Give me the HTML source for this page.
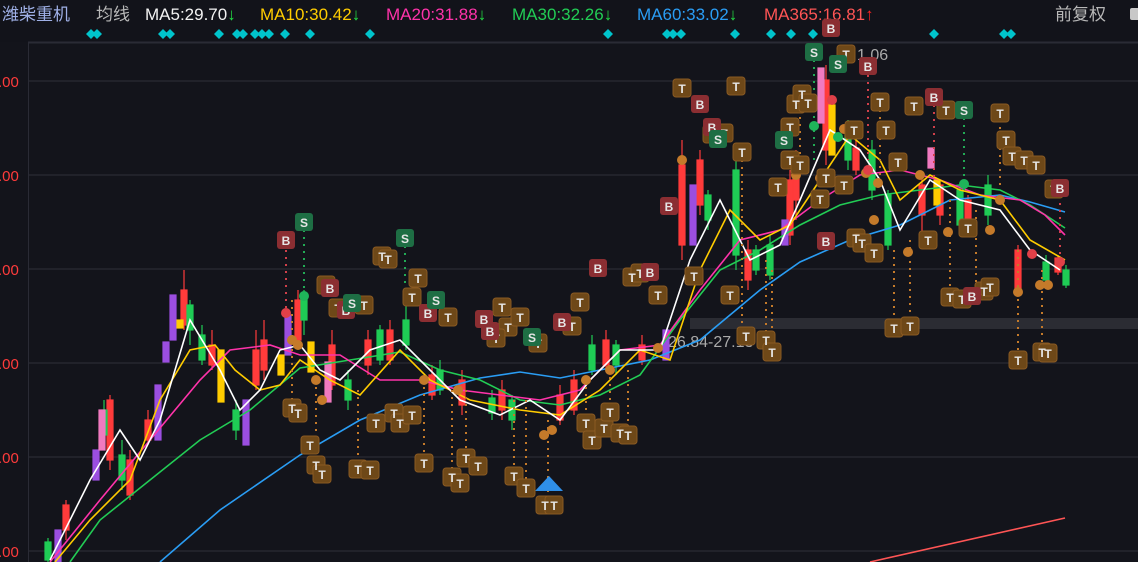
<!DOCTYPE html>
<html><head><meta charset="utf-8"><style>
html,body{margin:0;padding:0;background:#13141b;width:1138px;height:562px;overflow:hidden}
svg{display:block}
.h{font-family:"Liberation Sans","Noto Sans CJK SC",sans-serif;font-size:17px}
.m{font-family:"Liberation Sans",sans-serif;font-size:12px;font-weight:bold;fill:#e6e6e6;text-anchor:middle}
</style></head><body>
<svg width="1138" height="562" xmlns="http://www.w3.org/2000/svg">
<rect width="1138" height="562" fill="#13141b"/>
<rect width="1138" height="42" fill="#12131a"/>
<line x1="28" y1="42.5" x2="1138" y2="42.5" stroke="#2a2b35" stroke-width="2"/>
<line x1="28.5" y1="42" x2="28.5" y2="562" stroke="#2a2b35"/>
<g stroke="#262730" stroke-width="1.5">
<line x1="29" y1="81" x2="1138" y2="81"/><line x1="29" y1="175" x2="1138" y2="175"/>
<line x1="29" y1="269" x2="1138" y2="269"/><line x1="29" y1="363" x2="1138" y2="363"/>
<line x1="29" y1="457" x2="1138" y2="457"/><line x1="29" y1="551" x2="1138" y2="551"/>
</g>
<g font-family="Liberation Sans,sans-serif" font-size="15" fill="#ff3b3b">
<text x="-2" y="87">.00</text><text x="-2" y="181">.00</text><text x="-2" y="275">.00</text>
<text x="-2" y="369">.00</text><text x="-2" y="463">.00</text><text x="-2" y="557">.00</text>
</g>
<rect x="690" y="318" width="448" height="11" fill="#2b2c33"/>
<text x="668" y="347" font-family="Liberation Sans,sans-serif" font-size="16" fill="#aaa">26.84-27.13</text>
<text x="841" y="60" font-family="Liberation Sans,sans-serif" font-size="16" fill="#aaa">←1.06</text>

<g class="h">
<text x="2" y="20" fill="#9fb0e6">潍柴重机</text>
<text x="96" y="20" fill="#b8b8b8">均线</text>
<text x="145" y="20" fill="#f2f2f2">MA5:29.70<tspan fill="#22dd44">↓</tspan></text>
<text x="260" y="20" fill="#ffcc00">MA10:30.42<tspan fill="#22dd44">↓</tspan></text>
<text x="386" y="20" fill="#ff33aa">MA20:31.88<tspan fill="#22dd44">↓</tspan></text>
<text x="512" y="20" fill="#22cc55">MA30:32.26<tspan fill="#22dd44">↓</tspan></text>
<text x="637" y="20" fill="#2a9df4">MA60:33.02<tspan fill="#22dd44">↓</tspan></text>
<text x="764" y="20" fill="#ff5555">MA365:16.81<tspan fill="#ff2222">↑</tspan></text>
<text x="1055" y="20" fill="#b8b8b8">前复权</text>
</g>
<rect x="1130" y="8" width="10" height="12" rx="2" fill="#c8c8c8"/>

<g fill="#00c4cc">
<path d="M91 29l5 5-5 5-5-5z"/><path d="M97 29l5 5-5 5-5-5z"/><path d="M163 29l5 5-5 5-5-5z"/><path d="M170 29l5 5-5 5-5-5z"/>
<path d="M219 29l5 5-5 5-5-5z"/><path d="M237 29l5 5-5 5-5-5z"/><path d="M243 29l5 5-5 5-5-5z"/><path d="M255 29l5 5-5 5-5-5z"/>
<path d="M262 29l5 5-5 5-5-5z"/><path d="M269 29l5 5-5 5-5-5z"/><path d="M285 29l5 5-5 5-5-5z"/><path d="M310 29l5 5-5 5-5-5z"/>
<path d="M370 29l5 5-5 5-5-5z"/><path d="M608 29l5 5-5 5-5-5z"/><path d="M667 29l5 5-5 5-5-5z"/><path d="M673 29l5 5-5 5-5-5z"/>
<path d="M681 29l5 5-5 5-5-5z"/><path d="M735 29l5 5-5 5-5-5z"/><path d="M771 29l5 5-5 5-5-5z"/><path d="M791 29l5 5-5 5-5-5z"/>
<path d="M813 29l5 5-5 5-5-5z"/><path d="M934 29l5 5-5 5-5-5z"/><path d="M1004 29l5 5-5 5-5-5z"/><path d="M1011 29l5 5-5 5-5-5z"/>
</g>

<!-- candles -->
<g stroke-width="1.2">
<g fill="#ff3b3b" stroke="#ff3b3b">
<line x1="66" y1="500" x2="66" y2="540"/><rect x="63" y="505" width="6" height="25"/>
<line x1="110" y1="395" x2="110" y2="470"/><rect x="107" y="400" width="6" height="60"/>
<line x1="130" y1="450" x2="130" y2="500"/><rect x="127" y="460" width="6" height="35"/>
<line x1="148" y1="410" x2="148" y2="445"/><rect x="145" y="420" width="6" height="20"/>
<line x1="184" y1="270" x2="184" y2="330"/><rect x="181" y="290" width="6" height="35"/>
<line x1="212" y1="330" x2="212" y2="370"/><rect x="209" y="345" width="6" height="20"/>
<line x1="256" y1="330" x2="256" y2="390"/><rect x="253" y="350" width="6" height="35"/>
<line x1="264" y1="320" x2="264" y2="380"/><rect x="261" y="340" width="6" height="30"/>
<line x1="298" y1="290" x2="298" y2="345"/><rect x="295" y="300" width="6" height="40"/>
<line x1="332" y1="330" x2="332" y2="390"/><rect x="329" y="345" width="6" height="40"/>
<line x1="368" y1="330" x2="368" y2="375"/><rect x="365" y="340" width="6" height="25"/>
<line x1="390" y1="320" x2="390" y2="365"/><rect x="387" y="330" width="6" height="30"/>
<line x1="432" y1="365" x2="432" y2="400"/><rect x="429" y="375" width="6" height="20"/>
<line x1="462" y1="370" x2="462" y2="415"/><rect x="459" y="380" width="6" height="25"/>
<line x1="502" y1="380" x2="502" y2="420"/><rect x="499" y="390" width="6" height="20"/>
<line x1="560" y1="385" x2="560" y2="425"/><rect x="557" y="395" width="6" height="25"/>
<line x1="574" y1="370" x2="574" y2="415"/><rect x="571" y="380" width="6" height="30"/>
<line x1="606" y1="330" x2="606" y2="370"/><rect x="603" y="340" width="6" height="25"/>
<line x1="642" y1="335" x2="642" y2="365"/><rect x="639" y="345" width="6" height="15"/>
<line x1="682" y1="140" x2="682" y2="260"/><rect x="679" y="165" width="6" height="80"/>
<line x1="700" y1="150" x2="700" y2="215"/><rect x="697" y="160" width="6" height="45"/>
<line x1="748" y1="240" x2="748" y2="290"/><rect x="745" y="250" width="6" height="30"/>
<line x1="790" y1="170" x2="790" y2="245"/><rect x="787" y="180" width="6" height="55"/>
<line x1="796" y1="150" x2="796" y2="220"/><rect x="793" y="160" width="6" height="40"/>
<line x1="826" y1="65" x2="826" y2="165"/><rect x="823" y="80" width="6" height="70"/>
<line x1="856" y1="140" x2="856" y2="175"/><rect x="853" y="148" width="6" height="22"/>
<line x1="922" y1="175" x2="922" y2="240"/><rect x="919" y="185" width="6" height="30"/>
<line x1="940" y1="180" x2="940" y2="225"/><rect x="937" y="185" width="6" height="30"/>
<line x1="968" y1="195" x2="968" y2="230"/><rect x="965" y="200" width="6" height="20"/>
<line x1="1018" y1="245" x2="1018" y2="295"/><rect x="1015" y="250" width="6" height="40"/>
<line x1="1058" y1="255" x2="1058" y2="275"/><rect x="1055" y="258" width="6" height="14"/>
</g>
<g fill="#1fcc55" stroke="#1fcc55">
<line x1="48" y1="538" x2="48" y2="562"/><rect x="45" y="542" width="6" height="18"/>
<line x1="104" y1="400" x2="104" y2="440"/><rect x="101" y="410" width="6" height="25"/>
<line x1="122" y1="440" x2="122" y2="490"/><rect x="119" y="455" width="6" height="25"/>
<line x1="190" y1="300" x2="190" y2="345"/><rect x="187" y="305" width="6" height="25"/>
<line x1="202" y1="325" x2="202" y2="365"/><rect x="199" y="335" width="6" height="25"/>
<line x1="236" y1="400" x2="236" y2="440"/><rect x="233" y="410" width="6" height="20"/>
<line x1="304" y1="290" x2="304" y2="335"/><rect x="301" y="295" width="6" height="25"/>
<line x1="348" y1="370" x2="348" y2="410"/><rect x="345" y="380" width="6" height="20"/>
<line x1="380" y1="325" x2="380" y2="365"/><rect x="377" y="330" width="6" height="30"/>
<line x1="406" y1="305" x2="406" y2="350"/><rect x="403" y="320" width="6" height="25"/>
<line x1="440" y1="360" x2="440" y2="395"/><rect x="437" y="370" width="6" height="20"/>
<line x1="492" y1="390" x2="492" y2="420"/><rect x="489" y="398" width="6" height="15"/>
<line x1="512" y1="395" x2="512" y2="430"/><rect x="509" y="400" width="6" height="20"/>
<line x1="592" y1="335" x2="592" y2="375"/><rect x="589" y="345" width="6" height="25"/>
<line x1="616" y1="340" x2="616" y2="375"/><rect x="613" y="345" width="6" height="20"/>
<line x1="708" y1="190" x2="708" y2="230"/><rect x="705" y="195" width="6" height="25"/>
<line x1="736" y1="160" x2="736" y2="270"/><rect x="733" y="170" width="6" height="85"/>
<line x1="756" y1="245" x2="756" y2="275"/><rect x="753" y="250" width="6" height="20"/>
<line x1="770" y1="235" x2="770" y2="280"/><rect x="767" y="245" width="6" height="30"/>
<line x1="848" y1="120" x2="848" y2="170"/><rect x="845" y="130" width="6" height="30"/>
<line x1="872" y1="140" x2="872" y2="200"/><rect x="869" y="150" width="6" height="40"/>
<line x1="888" y1="190" x2="888" y2="250"/><rect x="885" y="195" width="6" height="50"/>
<line x1="960" y1="185" x2="960" y2="235"/><rect x="957" y="190" width="6" height="35"/>
<line x1="988" y1="175" x2="988" y2="225"/><rect x="985" y="185" width="6" height="30"/>
<line x1="1046" y1="255" x2="1046" y2="285"/><rect x="1043" y="262" width="6" height="18"/>
<line x1="1066" y1="265" x2="1066" y2="288"/><rect x="1063" y="270" width="6" height="15"/>
</g>
<g fill="#9b4ee0" stroke="#9b4ee0">
<rect x="55" y="530" width="6" height="32"/><rect x="93" y="450" width="6" height="30"/>
<rect x="155" y="385" width="6" height="55"/><rect x="163" y="342" width="6" height="20"/>
<rect x="170" y="295" width="6" height="45"/><rect x="243" y="400" width="6" height="45"/>
<rect x="285" y="315" width="6" height="40"/><rect x="663" y="330" width="6" height="30"/>
<rect x="690" y="185" width="6" height="60"/><rect x="782" y="220" width="6" height="25"/>
</g>
<g fill="#f07ac0" stroke="#f07ac0">
<rect x="99" y="410" width="6" height="40"/><rect x="325" y="362" width="6" height="40"/>
<rect x="818" y="68" width="6" height="55"/><rect x="928" y="148" width="6" height="20"/>
</g>
<g fill="#ffcc00" stroke="#ffcc00">
<rect x="177" y="320" width="6" height="8"/><rect x="218" y="350" width="6" height="52"/>
<rect x="278" y="355" width="6" height="20"/><rect x="308" y="342" width="6" height="30"/>
<rect x="829" y="105" width="6" height="50"/><rect x="934" y="180" width="6" height="25"/>
</g>
</g>

<!-- MAs -->
<g fill="none" stroke-width="1.6">
<polyline stroke="#2a9df4" points="160,562 220,510 300,455 360,420 420,395 480,378 520,372 560,378 600,370 650,360 700,340 760,290 800,262 850,240 900,225 950,200 1000,195 1030,202 1065,212"/>
<polyline stroke="#22cc55" points="70,562 100,520 150,480 200,440 250,410 300,368 350,360 400,352 440,370 480,380 520,400 560,405 600,395 640,375 680,320 720,270 760,250 800,225 840,205 880,195 920,190 960,185 1000,190 1030,205 1065,228"/>
<polyline stroke="#ff33aa" points="50,562 100,500 150,440 200,380 230,350 270,345 300,355 340,355 380,380 420,380 460,390 500,395 540,400 580,390 620,350 660,345 700,290 740,240 780,230 820,200 860,175 900,170 940,180 980,195 1020,200 1045,215 1065,235"/>
<polyline stroke="#ffcc00" points="55,562 90,520 130,480 160,400 190,350 215,345 235,370 260,390 280,385 300,360 330,380 360,395 400,350 430,380 470,400 520,410 560,415 600,390 640,350 670,360 700,270 730,210 760,240 790,225 820,180 850,135 880,160 900,200 930,175 960,190 1000,200 1030,240 1065,260"/>
<polyline stroke="#ffffff" points="50,560 90,480 120,430 140,460 160,420 190,320 220,370 240,410 260,390 280,350 300,345 320,370 340,380 370,350 400,340 430,370 460,400 500,415 530,400 560,420 590,380 620,350 660,350 690,260 720,200 750,260 780,245 800,200 830,130 860,150 880,180 900,230 930,180 960,200 1000,210 1030,250 1060,270"/>
<line stroke="#ff5555" x1="870" y1="562" x2="1065" y2="518"/>
</g>

<!-- dotted stems -->
<g stroke="#c47a2a" stroke-width="2" stroke-dasharray="2 5">
<line x1="292" y1="300" x2="292" y2="405"/><line x1="316" y1="380" x2="316" y2="460"/><line x1="358" y1="390" x2="358" y2="465"/>
<line x1="424" y1="380" x2="424" y2="460"/><line x1="452" y1="390" x2="452" y2="475"/><line x1="466" y1="390" x2="466" y2="455"/>
<line x1="514" y1="400" x2="514" y2="472"/><line x1="526" y1="400" x2="526" y2="485"/><line x1="548" y1="420" x2="548" y2="500"/>
<line x1="586" y1="380" x2="586" y2="420"/><line x1="610" y1="370" x2="610" y2="408"/><line x1="628" y1="370" x2="628" y2="432"/>
<line x1="742" y1="160" x2="742" y2="330"/><line x1="766" y1="260" x2="766" y2="336"/><line x1="772" y1="270" x2="772" y2="348"/>
<line x1="894" y1="250" x2="894" y2="325"/><line x1="910" y1="240" x2="910" y2="322"/><line x1="950" y1="200" x2="950" y2="293"/>
<line x1="976" y1="210" x2="976" y2="292"/><line x1="1018" y1="250" x2="1018" y2="356"/><line x1="1042" y1="270" x2="1042" y2="348"/>
<line x1="800" y1="110" x2="800" y2="160"/><line x1="880" y1="110" x2="880" y2="180"/><line x1="1000" y1="120" x2="1000" y2="190"/>
</g>
<g stroke="#d0404a" stroke-width="2" stroke-dasharray="2 5">
<line x1="286" y1="250" x2="286" y2="310"/><line x1="868" y1="75" x2="868" y2="160"/><line x1="934" y1="105" x2="934" y2="180"/><line x1="1060" y1="196" x2="1060" y2="255"/>
</g>
<g stroke="#22aa55" stroke-width="2" stroke-dasharray="2 5">
<line x1="304" y1="230" x2="304" y2="295"/><line x1="405" y1="246" x2="405" y2="305"/><line x1="814" y1="60" x2="814" y2="160"/><line x1="964" y1="118" x2="964" y2="190"/>
</g>

<!-- dots -->
<g fill="#c47a2a">
<circle cx="292" cy="340" r="5"/><circle cx="298" cy="345" r="5"/><circle cx="316" cy="380" r="5"/><circle cx="322" cy="400" r="5"/>
<circle cx="424" cy="380" r="5"/><circle cx="458" cy="390" r="5"/><circle cx="544" cy="435" r="5"/><circle cx="552" cy="430" r="5"/>
<circle cx="586" cy="380" r="5"/><circle cx="610" cy="370" r="5"/><circle cx="658" cy="348" r="5"/><circle cx="682" cy="160" r="5"/>
<circle cx="800" cy="165" r="5"/><circle cx="796" cy="175" r="5"/><circle cx="820" cy="178" r="5"/><circle cx="844" cy="129" r="5"/>
<circle cx="866" cy="173" r="5"/><circle cx="874" cy="220" r="5"/><circle cx="908" cy="252" r="5"/><circle cx="920" cy="175" r="5"/>
<circle cx="1018" cy="292" r="5"/><circle cx="1040" cy="285" r="5"/><circle cx="1048" cy="285" r="5"/><circle cx="1000" cy="200" r="5"/>
<circle cx="948" cy="232" r="5"/><circle cx="990" cy="230" r="5"/><circle cx="878" cy="183" r="5"/>
</g>
<g fill="#e04048"><circle cx="286" cy="313" r="5"/><circle cx="832" cy="100" r="5"/><circle cx="868" cy="170" r="5"/><circle cx="1032" cy="254" r="5"/><circle cx="1060" cy="262" r="5"/></g>
<g fill="#1fb55a"><circle cx="304" cy="296" r="5"/><circle cx="814" cy="126" r="5"/><circle cx="838" cy="137" r="5"/><circle cx="964" cy="184" r="5"/></g>

<path d="M549 476l14 15h-28z" fill="#2f8fe8"/>

<!-- T markers -->
<g fill="#6e4818" stroke="#8a5a22" stroke-width="1">
<rect x="283" y="399" width="18" height="18" rx="3"/><rect x="289" y="404" width="18" height="18" rx="3"/><rect x="301" y="436" width="18" height="18" rx="3"/>
<rect x="307" y="456" width="18" height="18" rx="3"/><rect x="313" y="465" width="18" height="18" rx="3"/><rect x="349" y="460" width="18" height="18" rx="3"/>
<rect x="361" y="461" width="18" height="18" rx="3"/><rect x="367" y="414" width="18" height="18" rx="3"/><rect x="385" y="404" width="18" height="18" rx="3"/>
<rect x="391" y="414" width="18" height="18" rx="3"/><rect x="403" y="406" width="18" height="18" rx="3"/><rect x="415" y="454" width="18" height="18" rx="3"/>
<rect x="443" y="468" width="18" height="18" rx="3"/><rect x="451" y="474" width="18" height="18" rx="3"/><rect x="457" y="449" width="18" height="18" rx="3"/>
<rect x="469" y="457" width="18" height="18" rx="3"/><rect x="505" y="467" width="18" height="18" rx="3"/><rect x="517" y="479" width="18" height="18" rx="3"/>
<rect x="536" y="496" width="18" height="18" rx="3"/><rect x="545" y="496" width="18" height="18" rx="3"/><rect x="577" y="414" width="18" height="18" rx="3"/>
<rect x="583" y="431" width="18" height="18" rx="3"/><rect x="595" y="419" width="18" height="18" rx="3"/><rect x="601" y="403" width="18" height="18" rx="3"/>
<rect x="611" y="424" width="18" height="18" rx="3"/><rect x="619" y="426" width="18" height="18" rx="3"/><rect x="571" y="293" width="18" height="18" rx="3"/>
<rect x="563" y="317" width="18" height="18" rx="3"/><rect x="529" y="334" width="18" height="18" rx="3"/><rect x="493" y="298" width="18" height="18" rx="3"/>
<rect x="499" y="318" width="18" height="18" rx="3"/><rect x="487" y="329" width="18" height="18" rx="3"/><rect x="511" y="308" width="18" height="18" rx="3"/>
<rect x="439" y="308" width="18" height="18" rx="3"/><rect x="409" y="269" width="18" height="18" rx="3"/><rect x="403" y="288" width="18" height="18" rx="3"/>
<rect x="373" y="247" width="18" height="18" rx="3"/><rect x="379" y="250" width="18" height="18" rx="3"/><rect x="355" y="296" width="18" height="18" rx="3"/>
<rect x="329" y="299" width="18" height="18" rx="3"/><rect x="317" y="276" width="18" height="18" rx="3"/><rect x="673" y="79" width="18" height="18" rx="3"/>
<rect x="727" y="77" width="18" height="18" rx="3"/><rect x="703" y="125" width="18" height="18" rx="3"/><rect x="715" y="124" width="18" height="18" rx="3"/>
<rect x="733" y="143" width="18" height="18" rx="3"/><rect x="685" y="267" width="18" height="18" rx="3"/><rect x="721" y="286" width="18" height="18" rx="3"/>
<rect x="737" y="327" width="18" height="18" rx="3"/><rect x="757" y="331" width="18" height="18" rx="3"/><rect x="763" y="343" width="18" height="18" rx="3"/>
<rect x="769" y="178" width="18" height="18" rx="3"/><rect x="787" y="95" width="18" height="18" rx="3"/><rect x="793" y="85" width="18" height="18" rx="3"/>
<rect x="781" y="151" width="18" height="18" rx="3"/><rect x="791" y="156" width="18" height="18" rx="3"/><rect x="799" y="94" width="18" height="18" rx="3"/>
<rect x="811" y="190" width="18" height="18" rx="3"/><rect x="817" y="169" width="18" height="18" rx="3"/><rect x="835" y="176" width="18" height="18" rx="3"/>
<rect x="847" y="229" width="18" height="18" rx="3"/><rect x="853" y="234" width="18" height="18" rx="3"/><rect x="865" y="244" width="18" height="18" rx="3"/>
<rect x="871" y="93" width="18" height="18" rx="3"/><rect x="877" y="121" width="18" height="18" rx="3"/><rect x="889" y="153" width="18" height="18" rx="3"/>
<rect x="905" y="97" width="18" height="18" rx="3"/><rect x="919" y="231" width="18" height="18" rx="3"/><rect x="937" y="101" width="18" height="18" rx="3"/>
<rect x="941" y="288" width="18" height="18" rx="3"/><rect x="953" y="290" width="18" height="18" rx="3"/><rect x="959" y="219" width="18" height="18" rx="3"/>
<rect x="975" y="282" width="18" height="18" rx="3"/><rect x="981" y="278" width="18" height="18" rx="3"/><rect x="991" y="104" width="18" height="18" rx="3"/>
<rect x="997" y="131" width="18" height="18" rx="3"/><rect x="1003" y="147" width="18" height="18" rx="3"/><rect x="1015" y="151" width="18" height="18" rx="3"/>
<rect x="1027" y="156" width="18" height="18" rx="3"/><rect x="1009" y="351" width="18" height="18" rx="3"/><rect x="1033" y="343" width="18" height="18" rx="3"/>
<rect x="1039" y="344" width="18" height="18" rx="3"/><rect x="885" y="319" width="18" height="18" rx="3"/><rect x="901" y="317" width="18" height="18" rx="3"/>
<rect x="623" y="268" width="18" height="18" rx="3"/><rect x="631" y="264" width="18" height="18" rx="3"/><rect x="649" y="286" width="18" height="18" rx="3"/>
<rect x="781" y="118" width="18" height="18" rx="3"/><rect x="845" y="121" width="18" height="18" rx="3"/><rect x="837" y="45" width="18" height="18" rx="3"/>
<rect x="1045" y="180" width="18" height="18" rx="3"/>
</g>
<g class="m">
<text x="292" y="413">T</text><text x="298" y="418">T</text><text x="310" y="450">T</text><text x="316" y="470">T</text><text x="322" y="479">T</text>
<text x="358" y="474">T</text><text x="370" y="475">T</text><text x="376" y="428">T</text><text x="394" y="418">T</text><text x="400" y="428">T</text>
<text x="412" y="420">T</text><text x="424" y="468">T</text><text x="452" y="482">T</text><text x="460" y="488">T</text><text x="466" y="463">T</text>
<text x="478" y="471">T</text><text x="514" y="481">T</text><text x="526" y="493">T</text><text x="545" y="510">T</text><text x="554" y="510">T</text>
<text x="586" y="428">T</text><text x="592" y="445">T</text><text x="604" y="433">T</text><text x="610" y="417">T</text><text x="620" y="438">T</text>
<text x="628" y="440">T</text><text x="580" y="307">T</text><text x="572" y="331">T</text><text x="538" y="348">T</text><text x="502" y="312">T</text>
<text x="508" y="332">T</text><text x="496" y="343">T</text><text x="520" y="322">T</text><text x="448" y="322">T</text><text x="418" y="283">T</text>
<text x="412" y="302">T</text><text x="382" y="261">T</text><text x="388" y="264">T</text><text x="364" y="310">T</text><text x="338" y="313">T</text>
<text x="326" y="290">T</text><text x="682" y="93">T</text><text x="736" y="91">T</text><text x="712" y="139">T</text><text x="724" y="138">T</text>
<text x="742" y="157">T</text><text x="694" y="281">T</text><text x="730" y="300">T</text><text x="746" y="341">T</text><text x="766" y="345">T</text>
<text x="772" y="357">T</text><text x="778" y="192">T</text><text x="796" y="109">T</text><text x="802" y="99">T</text><text x="790" y="165">T</text>
<text x="800" y="170">T</text><text x="808" y="108">T</text><text x="820" y="204">T</text><text x="826" y="183">T</text><text x="844" y="190">T</text>
<text x="856" y="243">T</text><text x="862" y="248">T</text><text x="874" y="258">T</text><text x="880" y="107">T</text><text x="886" y="135">T</text>
<text x="898" y="167">T</text><text x="914" y="111">T</text><text x="928" y="245">T</text><text x="946" y="115">T</text><text x="950" y="302">T</text>
<text x="962" y="304">T</text><text x="968" y="233">T</text><text x="984" y="296">T</text><text x="990" y="292">T</text><text x="1000" y="118">T</text>
<text x="1006" y="145">T</text><text x="1012" y="161">T</text><text x="1024" y="165">T</text><text x="1036" y="170">T</text><text x="1018" y="365">T</text>
<text x="1042" y="357">T</text><text x="1048" y="358">T</text><text x="894" y="333">T</text><text x="910" y="331">T</text><text x="632" y="282">T</text>
<text x="640" y="278">T</text><text x="658" y="300">T</text><text x="790" y="132">T</text><text x="854" y="135">T</text><text x="846" y="59">T</text>
<text x="1054" y="194">T</text>
</g>

<!-- B markers -->
<g fill="#8b2e32">
<rect x="277" y="231" width="18" height="18" rx="3"/><rect x="321" y="279" width="18" height="18" rx="3"/><rect x="589" y="259" width="18" height="18" rx="3"/>
<rect x="660" y="197" width="18" height="18" rx="3"/><rect x="691" y="95" width="18" height="18" rx="3"/><rect x="703" y="118" width="18" height="18" rx="3"/>
<rect x="817" y="232" width="18" height="18" rx="3"/><rect x="822" y="19" width="18" height="18" rx="3"/><rect x="859" y="57" width="18" height="18" rx="3"/>
<rect x="925" y="88" width="18" height="18" rx="3"/><rect x="1051" y="179" width="18" height="18" rx="3"/><rect x="963" y="287" width="18" height="18" rx="3"/>
<rect x="475" y="310" width="18" height="18" rx="3"/><rect x="481" y="322" width="18" height="18" rx="3"/><rect x="419" y="304" width="18" height="18" rx="3"/>
<rect x="553" y="313" width="18" height="18" rx="3"/><rect x="641" y="263" width="18" height="18" rx="3"/><rect x="337" y="301" width="18" height="18" rx="3"/>
</g>
<g class="m">
<text x="286" y="245">B</text><text x="330" y="293">B</text><text x="598" y="273">B</text><text x="669" y="211">B</text><text x="700" y="109">B</text>
<text x="712" y="132">B</text><text x="826" y="246">B</text><text x="831" y="33">B</text><text x="868" y="71">B</text><text x="934" y="102">B</text>
<text x="1060" y="193">B</text><text x="972" y="301">B</text><text x="484" y="324">B</text><text x="490" y="336">B</text><text x="428" y="318">B</text>
<text x="562" y="327">B</text><text x="650" y="277">B</text><text x="346" y="315">B</text>
</g>
<!-- S markers -->
<g fill="#1e6e44">
<rect x="295" y="213" width="18" height="18" rx="3"/><rect x="396" y="229" width="18" height="18" rx="3"/><rect x="427" y="291" width="18" height="18" rx="3"/>
<rect x="523" y="328" width="18" height="18" rx="3"/><rect x="805" y="43" width="18" height="18" rx="3"/><rect x="829" y="55" width="18" height="18" rx="3"/>
<rect x="775" y="131" width="18" height="18" rx="3"/><rect x="955" y="101" width="18" height="18" rx="3"/><rect x="343" y="294" width="18" height="18" rx="3"/>
<rect x="709" y="130" width="18" height="18" rx="3"/>
</g>
<g class="m">
<text x="304" y="227">S</text><text x="405" y="243">S</text><text x="436" y="305">S</text><text x="532" y="342">S</text><text x="814" y="57">S</text>
<text x="838" y="69">S</text><text x="784" y="145">S</text><text x="964" y="115">S</text><text x="352" y="308">S</text><text x="718" y="144">S</text>
</g>
</svg>
</body></html>
